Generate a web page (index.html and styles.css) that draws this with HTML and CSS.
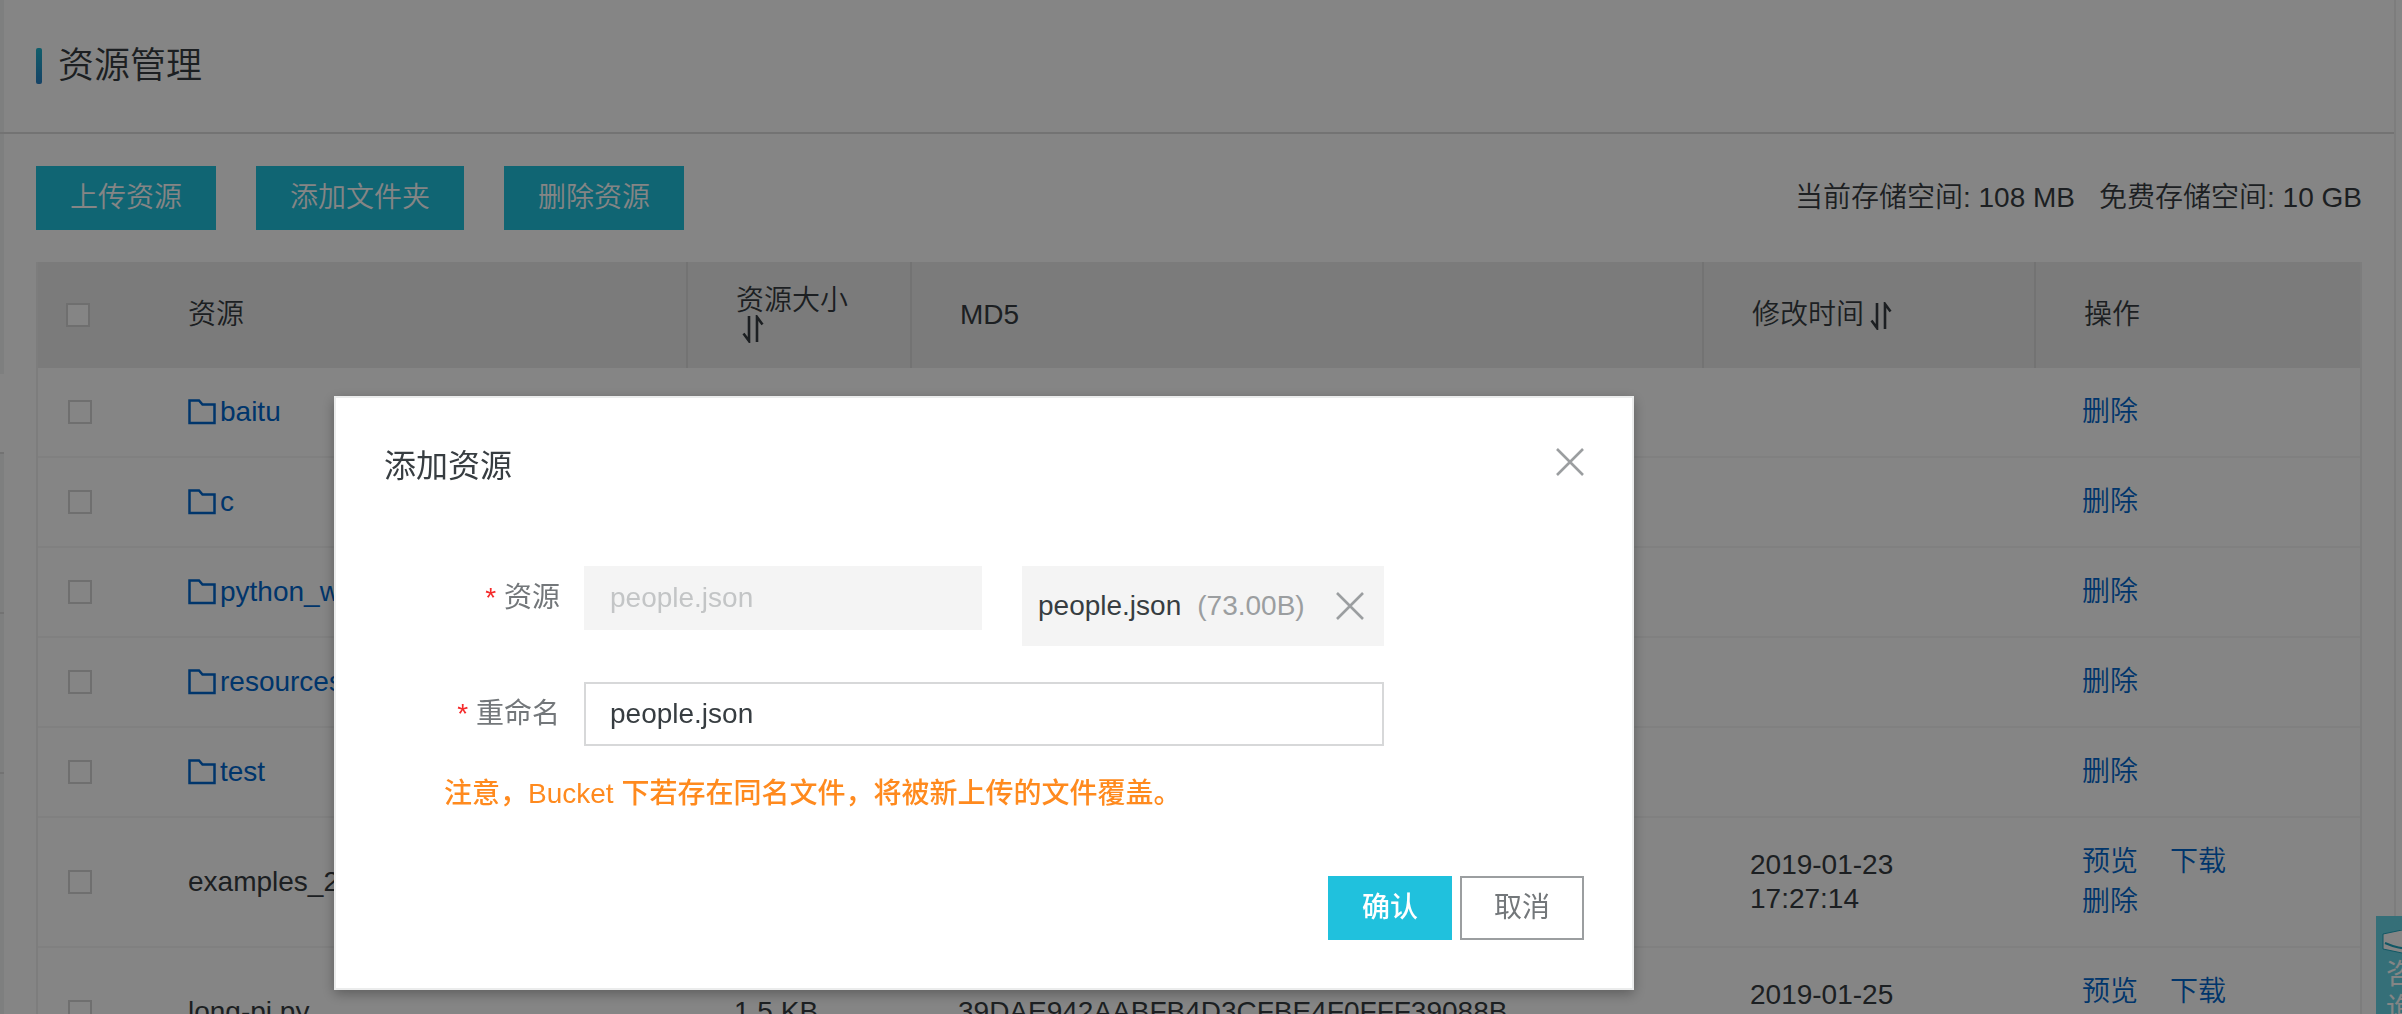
FILE: index.html
```
<!DOCTYPE html>
<html lang="zh-CN">
<head>
<meta charset="utf-8">
<title>资源管理</title>
<link rel="stylesheet" href="styles.css">
</head>
<body>
<svg class="sprite" aria-hidden="true">
  <symbol id="folder" viewBox="0 0 28 26"><path d="M1.5 1.5h9.500l3.500 4h12v18.500h-25z" fill="none" stroke="currentColor" stroke-width="2.500"/></symbol>
  <symbol id="sort" viewBox="0 0 22 28"><path d="M1.500 18.500 7 26V1M15 27V2l5.500 7.500" fill="none" stroke="currentColor" stroke-width="2.600"/></symbol>
  <symbol id="cross" viewBox="0 0 28 28"><path d="M1 1 27 27M27 1 1 27" fill="none" stroke="currentColor" stroke-width="2.600"/></symbol>
</svg>
<div class="app">
  <aside class="rail" aria-hidden="true"><div class="rail-top"></div><div class="rail-item"></div><div class="rail-item"></div><div class="rail-item"></div></aside>
  <main class="page">
    <header class="page-head"><h1>资源管理</h1></header>
    <section class="content">
      <div class="toolbar">
        <button class="btn primary" type="button">上传资源</button>
        <button class="btn primary" type="button">添加文件夹</button>
        <button class="btn primary" type="button">删除资源</button>
        <div class="storage"><span>当前存储空间: 108 MB</span><span>免费存储空间: 10 GB</span></div>
      </div>
      <table class="grid">
        <colgroup><col class="c-check"><col class="c-name"><col class="c-size"><col><col class="c-time"><col class="c-ops"></colgroup>
        <thead><tr>
          <th class="check"><input type="checkbox" aria-label="全选"></th>
          <th class="plain">资源</th>
          <th class="stack">资源大小<svg class="sort"><use href="#sort"/></svg></th>
          <th>MD5</th>
          <th>修改时间<svg class="sort inline"><use href="#sort"/></svg></th>
          <th>操作</th>
        </tr></thead>
        <tbody>
          <tr><td class="check"><input type="checkbox" aria-label="baitu"></td><td><a class="folder" href="#"><svg><use href="#folder"/></svg>baitu</a></td><td></td><td></td><td></td><td><a href="#">删除</a></td></tr>
          <tr><td class="check"><input type="checkbox" aria-label="c"></td><td><a class="folder" href="#"><svg><use href="#folder"/></svg>c</a></td><td></td><td></td><td></td><td><a href="#">删除</a></td></tr>
          <tr><td class="check"><input type="checkbox" aria-label="python_w"></td><td><a class="folder" href="#"><svg><use href="#folder"/></svg>python_w</a></td><td></td><td></td><td></td><td><a href="#">删除</a></td></tr>
          <tr><td class="check"><input type="checkbox" aria-label="resources"></td><td><a class="folder" href="#"><svg><use href="#folder"/></svg>resources</a></td><td></td><td></td><td></td><td><a href="#">删除</a></td></tr>
          <tr><td class="check"><input type="checkbox" aria-label="test"></td><td><a class="folder" href="#"><svg><use href="#folder"/></svg>test</a></td><td></td><td></td><td></td><td><a href="#">删除</a></td></tr>
          <tr class="file"><td class="check"><input type="checkbox" aria-label="examples_2"></td><td>examples_2</td><td></td><td></td><td class="time">2019-01-23 17:27:14</td><td><div class="ops"><a href="#">预览</a><a href="#">下载</a><a href="#">删除</a></div></td></tr>
          <tr class="file"><td class="check"><input type="checkbox" aria-label="long-pi.py"></td><td>long-pi.py</td><td>1.5 KB</td><td>39DAE942AABFB4D3CFBE4F0FFF39088B</td><td class="time">2019-01-25<br>&nbsp;</td><td><div class="ops two-line"><a href="#">预览</a><a href="#">下载</a></div></td></tr>
        </tbody>
      </table>
    </section>
  </main>
  <a class="consult" href="#"><svg viewBox="0 0 60 24"><path d="M1 4 20 0h20l19 4v15l-19 4H20L1 19z" fill="#fff" stroke="#20a8c1" stroke-width="1"/><path d="M3 13q27 12 54 0" fill="none" stroke="#20a8c1" stroke-width="2"/></svg>咨询</a>
</div>
<div class="mask">
  <form class="dialog" role="dialog" aria-labelledby="dlg-title">
    <header class="dialog-head"><h2 id="dlg-title">添加资源</h2><button class="icon-btn" type="button" aria-label="关闭"><svg><use href="#cross"/></svg></button></header>
    <div class="field">
      <label for="res"><span class="req">*</span> 资源</label>
      <div class="controls">
        <input id="res" type="text" value="people.json" disabled>
        <div class="file-tag"><span>people.json</span><span class="size">(73.00B)</span><button class="icon-btn" type="button" aria-label="移除"><svg><use href="#cross"/></svg></button></div>
      </div>
    </div>
    <div class="field">
      <label for="rename"><span class="req">*</span> 重命名</label>
      <div class="controls"><input id="rename" type="text" value="people.json"></div>
    </div>
    <p class="notice">注意，Bucket 下若存在同名文件，将被新上传的文件覆盖。</p>
    <footer class="dialog-foot"><button class="btn primary strong" type="submit">确认</button><button class="btn outline" type="button">取消</button></footer>
  </form>
</div>
</body>
</html>
```
FILE: styles.css
```
* { box-sizing: border-box; }
body {
  margin: 0;
  height: 100vh;
  overflow: hidden;
  background: #fff;
  color: #373d41;
  font: 28px/36px "Liberation Sans", "Noto Sans CJK SC", sans-serif;
}
h1, h2, p { margin: 0; font-weight: 400; }
a { color: #0067ce; text-decoration: none; }
button, input { font: inherit; color: inherit; margin: 0; }
.sprite { display: none; }

.app { display: flex; height: 100vh; overflow: hidden; font-weight: 350; }
.rail { display: flex; flex: 0 0 4px; flex-direction: column; margin-right: -4px; }
.rail-top { flex: 0 0 374px; margin-bottom: 78px; background: #f2f3f4; }
.rail-item { flex: 0 0 160px; border-top: 2px solid #dcdcdc; background: #f2f3f4; }
.rail-item:last-child { flex: 1; }
.page { flex: 1; min-width: 0; margin-right: 6px; border-right: 2px solid #f0f0f0; }
.page-head { display: flex; align-items: center; height: 134px; padding: 0 36px; border-bottom: 2px solid #dcdcdc; }
h1 { display: flex; align-items: center; gap: 16px; font-size: 36px; font-weight: 350; }
h1::before { content: ""; width: 6px; height: 36px; border-radius: 2px; background: linear-gradient(#20b4cd, #2a80c4); }
.content { padding: 32px 32px 0 36px; }
.toolbar { display: flex; align-items: center; gap: 40px; margin-bottom: 32px; }
.btn { height: 64px; padding: 0 32px; border: 2px solid transparent; line-height: 36px; }
.btn.primary { border-color: #20c1dd; background: #20c1dd; color: #fff; }
.btn.strong { font-weight: 500; }
.btn.outline { border-color: #9b9ea0; background: #fff; color: #73777a; }
.storage { display: flex; gap: 24px; margin-left: auto; }

.grid { width: 100%; table-layout: fixed; border-collapse: separate; border-spacing: 0; border: 2px solid #f0f0f0; border-top: 0; }
.c-check { width: 102px; }
.c-name { width: 546px; }
.c-size { width: 224px; }
.c-time { width: 332px; }
.c-ops { width: 326px; }
th { height: 106px; padding: 0 0 0 48px; border-left: 2px solid #dcdcdc; background: #ebecec; text-align: left; font-weight: inherit; }
th.check, th.plain { border-left: 0; }
td { height: 90px; padding: 0 48px; border-bottom: 2px solid #f5f5f5; }
td:last-child { padding: 0 0 0 48px; }
.file td { height: 130px; }
.time { line-height: 34px; }
.check { padding: 0 0 0 30px; }
th.check { padding: 0 0 0 28px; }
.check input { appearance: none; display: block; width: 24px; height: 24px; border: 2px solid #d5d5d5; background: #fff; }
.stack { line-height: 28px; }
.sort { display: block; width: 22px; height: 28px; margin-left: 6px; }
.sort.inline { display: inline-block; vertical-align: -6px; }
.folder { display: flex; align-items: center; gap: 4px; }
.folder svg { width: 28px; height: 26px; }
.ops { display: flex; flex-wrap: wrap; align-content: flex-start; column-gap: 32px; width: 160px; line-height: 40px; }
.two-line { height: 80px; }

.consult {
  position: fixed;
  right: -42px;
  bottom: -60px;
  width: 68px;
  height: 158px;
  padding: 14px 24px 0 10px;
  background: #67d5e7;
  color: #fff;
  font-weight: 400;
  line-height: 34px;
}
.consult svg { display: block; width: 60px; height: 24px; margin: 0 0 4px -4px; }

.mask { position: fixed; inset: 0; display: flex; align-items: flex-start; padding: 396px 0 0 334px; background: rgba(0, 0, 0, .48); }
.dialog { width: 1300px; padding: 38px 48px 48px; border: 2px solid #ebecec; background: #fff; box-shadow: 0 4px 12px rgba(0, 0, 0, .3); }
.dialog-head { display: flex; justify-content: space-between; height: 130px; }
h2 { padding-top: 12px; font-size: 32px; line-height: 36px; }
.icon-btn { display: flex; padding: 0; border: 0; background: none; color: #9b9ea0; }
.icon-btn svg { width: 28px; height: 28px; }
.dialog-head .icon-btn { padding-top: 12px; height: 40px; }
.field { display: flex; align-items: flex-start; margin-bottom: 36px; }
.field + .notice { margin-top: -6px; }
label { width: 176px; line-height: 64px; text-align: right; color: #73777a; }
.req { color: #f52a2a; }
.controls { display: flex; align-items: flex-start; gap: 40px; width: 800px; margin-left: 24px; }
.controls input { flex: 1; min-width: 0; height: 64px; padding: 0 24px; border: 2px solid #d7d8d9; background: #fff; }
.controls input:disabled { border-color: #f4f4f4; background: #f4f4f4; color: #c3c5c6; }
.file-tag { display: flex; align-items: center; width: 362px; height: 80px; padding: 0 20px 0 16px; background: #f4f4f4; }
.size { margin-left: 16px; color: #9b9ea0; }
.file-tag .icon-btn { margin-left: auto; }
.notice { padding-left: 60px; color: #ff8a1e; font-weight: 500; }
.dialog-foot { display: flex; justify-content: flex-end; gap: 8px; margin-top: 64px; }
```
